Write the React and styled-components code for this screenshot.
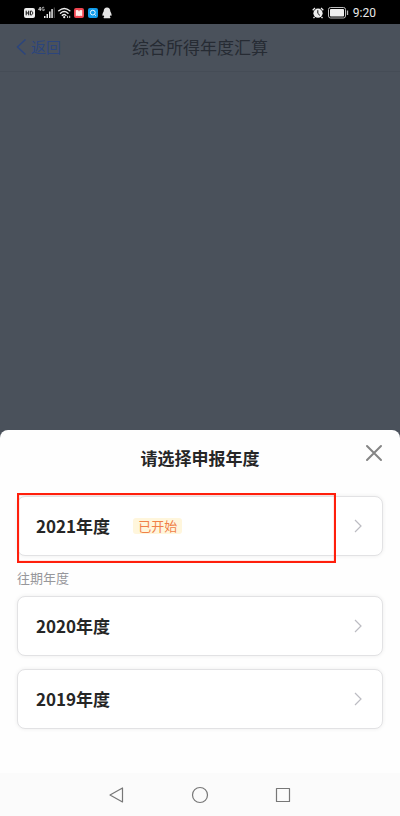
import React from "react";
import styled, { createGlobalStyle } from "styled-components";

const GlobalStyle = createGlobalStyle`
  *, *::before, *::after { box-sizing: border-box; }
  body {
    margin: 0;
    background: #4a515b;
    font-family: "Noto Sans CJK SC", "Noto Sans", sans-serif;
  }
  button { font: inherit; color: inherit; border: 0; background: none; padding: 0; cursor: pointer; }
  h1, h2, p { margin: 0; }
  svg { display: block; flex: none; }
`;

const Screen = styled.div`
  min-height: 100vh;
  display: flex;
  flex-direction: column;
`;

const StatusBar = styled.div`
  display: flex;
  justify-content: space-between;
  align-items: center;
  height: 24px;
  padding: 1px 24px 0;
  background: #000;
  color: #e8e8e8;
  font-family: Roboto, sans-serif;
  font-size: 12px;
  line-height: 16px;
`;

const StatusGroup = styled.div`
  display: flex;
  align-items: center;
  gap: ${({ $gap }) => $gap}px;
`;

const Header = styled.header`
  display: grid;
  grid-template-columns: 1fr auto 1fr;
  align-items: center;
  height: 48px;
  padding: 0 16px 1px;
  border-bottom: 1px solid #454c56;
`;

const BackLink = styled.a`
  display: flex;
  align-items: center;
  gap: 4px;
  color: #2c457c;
  font-size: 15px;
  line-height: 24px;
  text-decoration: none;
`;

const PageTitle = styled.h1`
  color: #262b33;
  font-size: 17px;
  font-weight: 400;
  line-height: 24px;
`;

const Backdrop = styled.div`
  flex: 1;
`;

const Sheet = styled.section`
  padding: 16px 17px 44px;
  border-radius: 8px 8px 0 0;
  background: #fefefe;
`;

const SheetHeader = styled.div`
  display: grid;
  grid-template-columns: 1fr auto 1fr;
  align-items: center;
  height: 24px;
  margin-bottom: 26px;
`;

const SheetTitle = styled.h2`
  grid-column: 2;
  color: #262626;
  font-size: 17px;
  font-weight: 700;
  line-height: 24px;
`;

const CloseButton = styled.button`
  justify-self: end;
  align-self: start;
  margin-top: -2px;
`;

const Highlighted = styled.div`
  position: relative;

  &::after {
    content: "";
    position: absolute;
    inset: -3px 47px -7px 0;
    border: 2px solid #ff1f0c;
    box-shadow: inset 0 0 1px #ff1f0c;
    pointer-events: none;
  }
`;

const YearCard = styled.button`
  display: flex;
  align-items: center;
  width: 100%;
  height: 60px;
  padding: 0 19px 0 18px;
  border: 1px solid #e2e2e4;
  border-radius: 8px;
  background: #fff;
  box-shadow: 0 0 4px rgba(0, 0, 0, 0.07);
`;

const YearName = styled.span`
  color: #262626;
  font-size: 17px;
  font-weight: 700;
  line-height: 24px;
`;

const Tag = styled.span`
  margin-left: 23px;
  padding: 0 5px;
  border-radius: 3px;
  background: #fff6dc;
  color: #f08048;
  font-size: 13px;
  line-height: 16px;
`;

const CardArrow = styled.span`
  margin-left: auto;
`;

const GroupLabel = styled.p`
  margin: 12px 0 8px;
  color: #97979b;
  font-size: 13px;
  line-height: 20px;
`;

const CardList = styled.div`
  display: flex;
  flex-direction: column;
  gap: 13px;
`;

const NavBar = styled.nav`
  display: flex;
  justify-content: center;
  align-items: center;
  gap: 63px;
  height: 43px;
  background: #fbfbfb;
`;

const HdIcon = () => (
  <svg width="11" height="10" viewBox="0 0 11 10">
    <rect width="11" height="10" rx="2" fill="#eee" />
    <path d="M2.2 2.7v4.6M4.7 2.7v4.6M2.2 5h2.5M6.4 3.1v3.8h.8c2 0 2-3.8 0-3.8z" fill="none" stroke="#111" strokeWidth="1" />
  </svg>
);

const SignalIcon = () => (
  <svg width="17" height="13" viewBox="0 0 17 13">
    <g fill="none" stroke="#ddd" strokeWidth=".8">
      <path d="M2.3 5V1L.5 3.6h2.6M6.2 1.6C4.5.5 4 1.8 4 3s1 2 2.2 1.4V3.2H5.3" />
    </g>
    <g fill="#e8e8e8">
      <rect x="6" y="10" width="1.5" height="2" />
      <rect x="8.5" y="8" width="1.5" height="4" />
      <rect x="11" y="5.5" width="1.5" height="6.5" />
      <rect x="13.3" y="3" width="1.5" height="9" />
    </g>
    <rect x="15.8" y="1.5" width="1" height="10.5" fill="#555" />
  </svg>
);

const WifiIcon = () => (
  <svg width="13" height="12" viewBox="0 0 13 12">
    <g fill="none" stroke="#eee" strokeWidth="1.4" strokeLinecap="round">
      <path d="M.8 3.8Q6.2-1 11.8 3.8M2.5 6.2Q6.2 3 10 6.2M4.3 8.4Q6.2 6.8 8 8.4" />
    </g>
    <circle cx="6.2" cy="10.2" r="1.1" fill="#eee" />
    <path d="M9.6 8.8v2.2M11.7 8.8v2.2" stroke="#ccc" strokeWidth="1" />
  </svg>
);

const BookIcon = () => (
  <svg width="10" height="10" viewBox="0 0 10 10">
    <rect width="10" height="10" rx="2" fill="#ee4550" />
    <path d="M1.8 2.2q1.7-.5 3.2.3 1.5-.8 3.2-.3v5.700q-1.7-.3-3.2.1-1.500-.4-3.200-.1z" fill="#ffe9e6" />
    <path d="M5 2v1.300" stroke="#ee4550" strokeWidth=".7" />
  </svg>
);

const SearchAppIcon = () => (
  <svg width="11" height="10" viewBox="-1 0 11 10">
    <rect width="10" height="10" rx="2" fill="#109bea" />
    <circle cx="4.8" cy="4.6" r="2.4" fill="none" stroke="#e9f8ff" strokeWidth="1" />
    <path d="M6.5 6.4l1.4 1.3" stroke="#e9f8ff" strokeWidth="1" />
  </svg>
);

const PenguinIcon = () => (
  <svg width="11" height="12" viewBox="-1 0 11 12">
    <path d="M5 .5C2.900.5 1.700 2 1.700 4.200 1.100 5.300.3 6.800.4 8.400c.1.6.6.4 1-.1.200.5.500 1 .9 1.400-1.400.6-.8 1.600.4 1.600h4.600c1.200 0 1.800-1 .4-1.600.4-.4.7-.9.9-1.400.4.5.9.7 1 .1.100-1.600-.7-3.100-1.300-4.200C8.300 2 7.100.5 5 .5z" fill="#e4e4e4" />
  </svg>
);

const AlarmIcon = () => (
  <svg width="12" height="12" viewBox="0 0 12 12">
    <circle cx="6" cy="6.200" r="4.600" fill="#eee" />
    <path d="M.7 3.200L3 1M11.300 3.200L9 1M2.500 10l-1 1.200M9.500 10l1 1.200" stroke="#eee" strokeWidth="1.300" />
    <path d="M5.800 3.200v3.200l2.100 2" fill="none" stroke="#111" strokeWidth="1" />
  </svg>
);

const BatteryIcon = () => (
  <svg width="21" height="12" viewBox="0 0 21 12">
    <rect x=".5" y=".5" width="17" height="10.500" rx="2" fill="none" stroke="#bbb" />
    <rect x="2" y="2" width="14" height="7.500" rx=".8" fill="#eee" />
    <path d="M19.500 3.500v4.500" stroke="#bbb" strokeWidth="1.300" />
  </svg>
);

const BackIcon = () => (
  <svg width="11" height="18" viewBox="0 0 11 18">
    <path d="M9.500 1.500L1.500 9l8 7.500" fill="none" stroke="currentColor" strokeWidth="1.500" />
  </svg>
);

const CloseIcon = () => (
  <svg width="18" height="18" viewBox="0 0 18 18">
    <path d="M2 2l14 14M16 2L2 16" stroke="#858585" strokeWidth="2" strokeLinecap="round" />
  </svg>
);

const ArrowIcon = () => (
  <svg width="9" height="14" viewBox="0 0 9 14">
    <path d="M1 1l6 6-6 6" fill="none" stroke="#bcbcc2" strokeWidth="1.200" />
  </svg>
);

const Year = ({ name, tag }) => (
  <YearCard type="button">
    <YearName>{name}</YearName>
    {tag && <Tag>{tag}</Tag>}
    <CardArrow><ArrowIcon /></CardArrow>
  </YearCard>
);

const navItems = [
  { label: "返回上一页", shape: <path d="M15.500 3v14L3 10z" /> },
  { label: "主屏幕", shape: <circle cx="10" cy="10" r="7.500" /> },
  { label: "最近任务", shape: <rect x="3.500" y="3.500" width="13" height="13" /> },
];

export default function App() {
  return (
    <Screen>
      <GlobalStyle />
      <StatusBar>
        <StatusGroup $gap={3}>
          <HdIcon />
          <SignalIcon />
          <WifiIcon />
          <BookIcon />
          <SearchAppIcon />
          <PenguinIcon />
        </StatusGroup>
        <StatusGroup $gap={4}>
          <AlarmIcon />
          <BatteryIcon />
          <span>9:20</span>
        </StatusGroup>
      </StatusBar>
      <Header>
        <BackLink href="#back"><BackIcon />返回</BackLink>
        <PageTitle>综合所得年度汇算</PageTitle>
      </Header>
      <Backdrop />
      <Sheet role="dialog" aria-labelledby="sheet-title">
        <SheetHeader>
          <SheetTitle id="sheet-title">请选择申报年度</SheetTitle>
          <CloseButton type="button" aria-label="关闭"><CloseIcon /></CloseButton>
        </SheetHeader>
        <Highlighted>
          <Year name="2021年度" tag="已开始" />
        </Highlighted>
        <GroupLabel>往期年度</GroupLabel>
        <CardList>
          <Year name="2020年度" />
          <Year name="2019年度" />
        </CardList>
      </Sheet>
      <NavBar aria-label="系统导航">
        {navItems.map(({ label, shape }) => (
          <button key={label} type="button" aria-label={label}>
            <svg width="20" height="20" viewBox="0 0 20 20" fill="none" stroke="#777" strokeWidth="1.200" strokeLinejoin="round">
              {shape}
            </svg>
          </button>
        ))}
      </NavBar>
    </Screen>
  );
}
